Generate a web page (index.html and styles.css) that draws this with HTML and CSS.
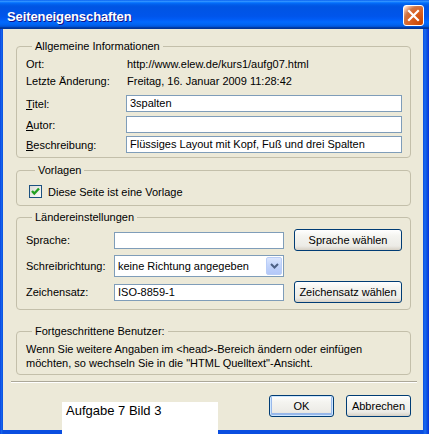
FILE: index.html
```html
<!DOCTYPE html>
<html lang="de">
<head>
<meta charset="utf-8">
<title>Seiteneigenschaften</title>
<link rel="stylesheet" href="styles.css">
</head>
<body>
<div class="window">
  <div class="titlebar">
    <span class="title">Seiteneigenschaften</span>
    <span class="close"><svg width="21" height="21" viewBox="0 0 21 21"><path d="M6 6 L15 15 M15 6 L6 15" stroke="#fff" stroke-width="2.2" stroke-linecap="square" fill="none"/></svg></span>
  </div>
  <div class="body">
    <div class="group g1">
      <div class="gtitle">Allgemeine Informationen</div>
      <div class="row r-ort"><span class="lbl w100">Ort:</span><span>http://www.elew.de/kurs1/aufg07.html</span></div>
      <div class="row r-date"><span class="lbl w100">Letzte Änderung:</span><span>Freitag, 16. Januar 2009 11:28:42</span></div>
      <div class="row r-titel"><span class="lbl w100"><u>T</u>itel:</span><span class="input grow">3spalten</span></div>
      <div class="row r-autor"><span class="lbl w100"><u>A</u>utor:</span><span class="input grow"></span></div>
      <div class="row r-besch"><span class="lbl w100"><u>B</u>eschreibung:</span><span class="input grow">Flüssiges Layout mit Kopf, Fuß und drei Spalten</span></div>
    </div>
    <div class="group g2">
      <div class="gtitle">Vorlagen</div>
      <div class="checkrow">
        <span class="checkbox"><svg width="11" height="11" viewBox="0 0 11 11"><path d="M2 5 L4.3 7.5 L9 2.5" stroke="#21a121" stroke-width="2.4" fill="none"/></svg></span>
        <span>Diese Seite ist eine Vorlage</span>
      </div>
    </div>
    <div class="group g3">
      <div class="gtitle">Ländereinstellungen</div>
      <div class="row3 r-1"><span class="lbl w88">Sprache:</span><span class="input w170"></span><span class="btn wbtn">Sprache wählen</span></div>
      <div class="row3 r-2"><span class="lbl w88">Schreibrichtung:</span><span class="select w170"><span class="seltext">keine Richtung angegeben</span><span class="arrow"><svg width="9" height="6" viewBox="0 0 9 6"><path d="M1 1 L4.5 4.5 L8 1" stroke="#4d6185" stroke-width="2" fill="none"/></svg></span></span></div>
      <div class="row3 r-3"><span class="lbl w88">Zeichensatz:</span><span class="input w170">ISO-8859-1</span><span class="btn wbtn">Zeichensatz wählen</span></div>
    </div>
    <div class="group g4">
      <div class="gtitle">Fortgeschrittene Benutzer:</div>
      <p class="info">Wenn Sie weitere Angaben im &lt;head&gt;-Bereich ändern oder einfügen<br>möchten, so wechseln Sie in die "HTML Quelltext"-Ansicht.</p>
    </div>
    <div class="sep"></div>
    <div class="actions">
      <span class="btn wok default">OK</span>
      <span class="btn wok">Abbrechen</span>
    </div>
  </div>
  <div class="note">Aufgabe 7 Bild 3</div>
</div>
</body>
</html>
```
FILE: styles.css
```css
* { box-sizing: border-box; }
html, body { margin: 0; padding: 0; }
body {
  width: 429px;
  height: 434px;
  overflow: hidden;
  font-family: "Liberation Sans", Arial, sans-serif;
  font-size: 11px;
  color: #000;
  background: #fff;
}
.window {
  position: relative;
  width: 429px;
  height: 434px;
  display: flex;
  flex-direction: column;
  background: linear-gradient(to right, #0831d9 0, #166aee 1px, #0a4ee0 3px, #0a4ee0 423px, #1a6af0 425px, #0d51e0 427px, #0831d9 429px);
}
.titlebar {
  height: 29px;
  flex: none;
  display: flex;
  align-items: center;
  justify-content: space-between;
  padding: 0 5px 0 7px;
  background: linear-gradient(to bottom, #0058ee 0%, #3593ff 4%, #288eff 6%, #127dff 8%, #036ffc 10%, #0262ee 14%, #0057e5 20%, #0054e3 24%, #0055eb 56%, #005bf5 66%, #026afe 76%, #0062ef 86%, #0052d6 92%, #0040ab 94%, #003092 100%);
}
.title {
  color: #fff;
  font-weight: bold;
  font-size: 13px;
  letter-spacing: -0.1px;
  text-shadow: 1px 1px #0f1089;
  margin-top: 3px;
}
.close {
  width: 21px;
  height: 21px;
  border: 1px solid #fff;
  border-radius: 3px;
  display: flex;
  align-items: center;
  justify-content: center;
  background: radial-gradient(circle at 90% 90%, #cc4600 0%, #dc6527 55%, #cd7546 70%, #ffccb2 90%, #fff 100%);
  margin-top: 2px;
}
.close svg { display: block; margin: -1px; }
.body {
  flex: 1;
  margin: 0 6px 4px 3px;
  padding: 17px 12px 0 13px;
  background: #ece9d8;
}
.group {
  border: 1px solid #c3bfaa;
  border-radius: 4px;
}
.gtitle {
  width: fit-content;
  margin: -7px 0 0 6px;
  padding: 0 3px;
  height: 13px;
  line-height: 13px;
  background: #ece9d8;
}
.g1 { padding: 0 8px 4px 9px; }
.g2 { margin-top: 12px; padding: 0 8px 7px 12px; }
.g3 { margin-top: 11px; padding: 0 9px 6px 9px; }
.g4 { margin-top: 21px; padding: 0 8px 4px 9px; }

.row { display: flex; align-items: center; }
.lbl { flex: none; }
.w100 { width: 100px; }
.w88 { width: 88px; }
.r-ort { margin-top: 3px; height: 16px; }
.r-date { margin-top: 1px; height: 16px; }
.r-titel { margin-top: 6px; height: 17px; }
.r-autor { margin-top: 4px; height: 17px; }
.r-besch { margin-top: 3px; height: 17px; }
.r-ort span + span, .r-date span + span { padding-left: 1px; }

.input {
  display: block;
  height: 17px;
  line-height: 15px;
  padding: 0 3px;
  background: #fff;
  border: 1px solid #7f9db9;
  white-space: nowrap;
  overflow: hidden;
}
.grow { flex: 1; }
.w170 { width: 170px; flex: none; }

.checkrow {
  margin-top: 8px;
  height: 13px;
  display: flex;
  align-items: center;
  gap: 6px;
}
.checkbox {
  width: 13px;
  height: 13px;
  border: 1px solid #1c5180;
  background: linear-gradient(135deg, #dcdcd7 0%, #fbfbf9 100%);
  display: flex;
  align-items: center;
  justify-content: center;
}
.checkbox svg { display: block; }

.row3 {
  display: flex;
  align-items: center;
  height: 22px;
}
.r-1 { margin-top: 5px; }
.r-2, .r-3 { margin-top: 4px; }
.r-1 .input, .r-3 .input { margin-right: 10px; }
.select {
  height: 22px;
  border: 1px solid #7f9db9;
  background: #fff;
  display: flex;
  align-items: center;
  justify-content: space-between;
  padding: 1px 1px 1px 3px;
}
.arrow {
  width: 16px;
  height: 18px;
  border-radius: 2px;
  border: 1px solid #b9cdf7;
  background: linear-gradient(to bottom, #dbe6fe 0%, #c1d3fb 50%, #b4c8f8 100%);
  display: flex;
  align-items: center;
  justify-content: center;
}
.arrow svg { display: block; }

.btn {
  display: flex;
  align-items: center;
  justify-content: center;
  height: 22px;
  border: 1px solid #003c74;
  border-radius: 3px;
  background: linear-gradient(to bottom, #ffffff 0%, #f4f4f0 30%, #ecebe6 80%, #d6d0c5 100%);
  white-space: nowrap;
}
.wbtn { width: 108px; flex: none; }
.wok { width: 65px; }
.default { box-shadow: inset 0 0 0 1px #cee7ff, inset 0 -1px 0 2px #98b8ea; }

.info {
  margin: 4px 0 0;
  line-height: 14px;
}
.sep {
  margin: 6px -6px 0 -5px;
  height: 2px;
  border-top: 1px solid #aca899;
  border-bottom: 1px solid #fff;
}
.actions {
  margin-top: 12px;
  display: flex;
  justify-content: flex-end;
  gap: 12px;
}
.note {
  position: absolute;
  left: 62px;
  top: 402px;
  width: 156px;
  height: 32px;
  background: #fff;
  font-size: 13px;
  line-height: 18px;
  padding-left: 4px;
}
```
